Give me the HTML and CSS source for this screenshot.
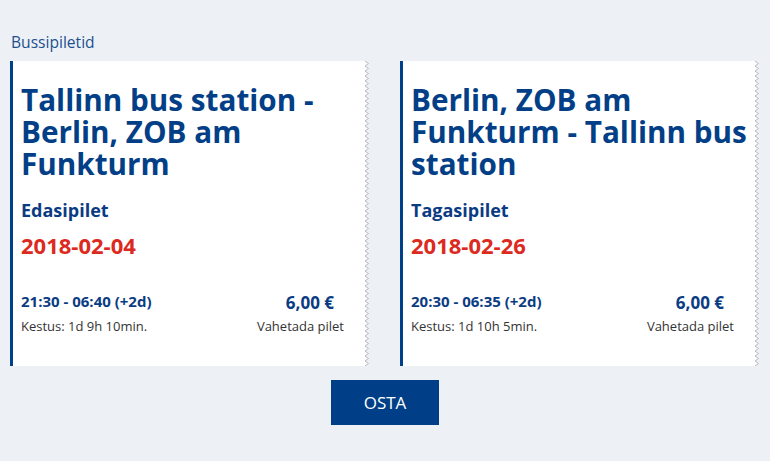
FILE: index.html
```html
<!DOCTYPE html>
<html lang="et">
<head>
<meta charset="UTF-8" />
<meta name="viewport" content="width=device-width, initial-scale=1" />
<title>Bussipiletid</title>
<link rel="stylesheet" href="styles.css">
</head>
<body>

  <main class="piletid">
    <h2 class="piletid-pealkiri">Bussipiletid</h2>

    <div class="piletid-grid">
      <article class="pilet">
        <div class="pilet-sisu">
          <h1 class="pilet-marsruut">Tallinn bus station - Berlin, ZOB am Funkturm</h1>
          <h3 class="pilet-tyyp">Edasipilet</h3>
          <p class="pilet-kuupaev">2018-02-04</p>
          <div class="pilet-info">
            <span class="pilet-aeg">21:30 - 06:40 (+2d)</span>
            <span class="pilet-hind">6,00 €</span>
            <span class="pilet-kestus">Kestus: 1d 9h 10min.</span>
            <span class="pilet-vahetus">Vahetada pilet</span>
          </div>
        </div>
        <svg class="pilet-serv" aria-hidden="true">
          <defs>
            <pattern id="serv1" width="8" height="5" patternUnits="userSpaceOnUse">
              <path d="M0 0 L3 0 L6.5 2.5 L3 5 L0 5 Z" fill="#fff" />
              <path d="M3 0 L6.5 2.5 L3 5" fill="none" stroke="#b4b9bf" stroke-width="1" />
            </pattern>
          </defs>
          <rect width="100%" height="100%" fill="url(#serv1)" />
        </svg>
      </article>

      <article class="pilet">
        <div class="pilet-sisu">
          <h1 class="pilet-marsruut">Berlin, ZOB am Funkturm - Tallinn bus station</h1>
          <h3 class="pilet-tyyp">Tagasipilet</h3>
          <p class="pilet-kuupaev">2018-02-26</p>
          <div class="pilet-info">
            <span class="pilet-aeg">20:30 - 06:35 (+2d)</span>
            <span class="pilet-hind">6,00 €</span>
            <span class="pilet-kestus">Kestus: 1d 10h 5min.</span>
            <span class="pilet-vahetus">Vahetada pilet</span>
          </div>
        </div>
        <svg class="pilet-serv" aria-hidden="true">
          <rect width="100%" height="100%" fill="url(#serv1)" />
        </svg>
      </article>
    </div>

    <div class="osta-rida">
      <button class="osta-btn">OSTA</button>
    </div>
  </main>

</body>
</html>
```

FILE: styles.css
```css
body {
  font-family: 'Open Sans', 'Noto Sans', sans-serif;
  margin: 0;
  background: #edf1f5;
  color: #0b3c83;
}

.piletid {
  padding: 32px 10px 0 10px;
}

.piletid-pealkiri {
  margin: 0 0 9px 1px;
  font-size: 15.6px;
  line-height: 20px;
  font-weight: 400;
  color: #1d4f8f;
}

.piletid-grid {
  display: grid;
  grid-template-columns: 360px 360px;
  gap: 30px;
}

/* Pilet */
.pilet {
  display: flex;
  height: 305px;
}
.pilet-sisu {
  flex: 1;
  background: #fff;
  border-left: 3px solid #003f8a;
  padding: 23px 18px 0 8px;
  min-width: 0;
}
.pilet-serv {
  width: 8px;
  height: 100%;
  flex-shrink: 0;
}

.pilet-marsruut {
  margin: 0 -18px 0 0;
  font-size: 29.7px;
  line-height: 32px;
  font-weight: 700;
  color: #033f87;
}
.pilet-tyyp {
  margin: 19px 0 0 0;
  font-size: 18px;
  line-height: 22px;
  font-weight: 700;
  color: #0b3c83;
}
.pilet-kuupaev {
  margin: 10px 0 0 0;
  font-size: 22px;
  line-height: 28px;
  font-weight: 700;
  color: #dc2a1e;
}

.pilet-info {
  margin-top: 32px;
  display: grid;
  grid-template-columns: 1fr auto;
  row-gap: 6px;
}
.pilet-aeg {
  font-size: 15px;
  line-height: 20px;
  font-weight: 700;
}
.pilet-hind {
  font-size: 17px;
  line-height: 20px;
  font-weight: 700;
  text-align: right;
  padding-right: 10px;
  position: relative;
  top: 2px;
}
.pilet-kestus {
  font-size: 13px;
  line-height: 18px;
  color: #333;
}
.pilet-vahetus {
  font-size: 13px;
  line-height: 18px;
  color: #333;
  text-align: right;
}

/* Osta nupp */
.osta-rida {
  display: flex;
  justify-content: center;
  margin-top: 14px;
}
.osta-btn {
  width: 108px;
  height: 45px;
  background-color: #003f87;
  color: #fff;
  border: none;
  font-family: inherit;
  font-size: 17px;
  cursor: pointer;
}
.osta-btn:hover {
  background-color: #00306a;
}
```
